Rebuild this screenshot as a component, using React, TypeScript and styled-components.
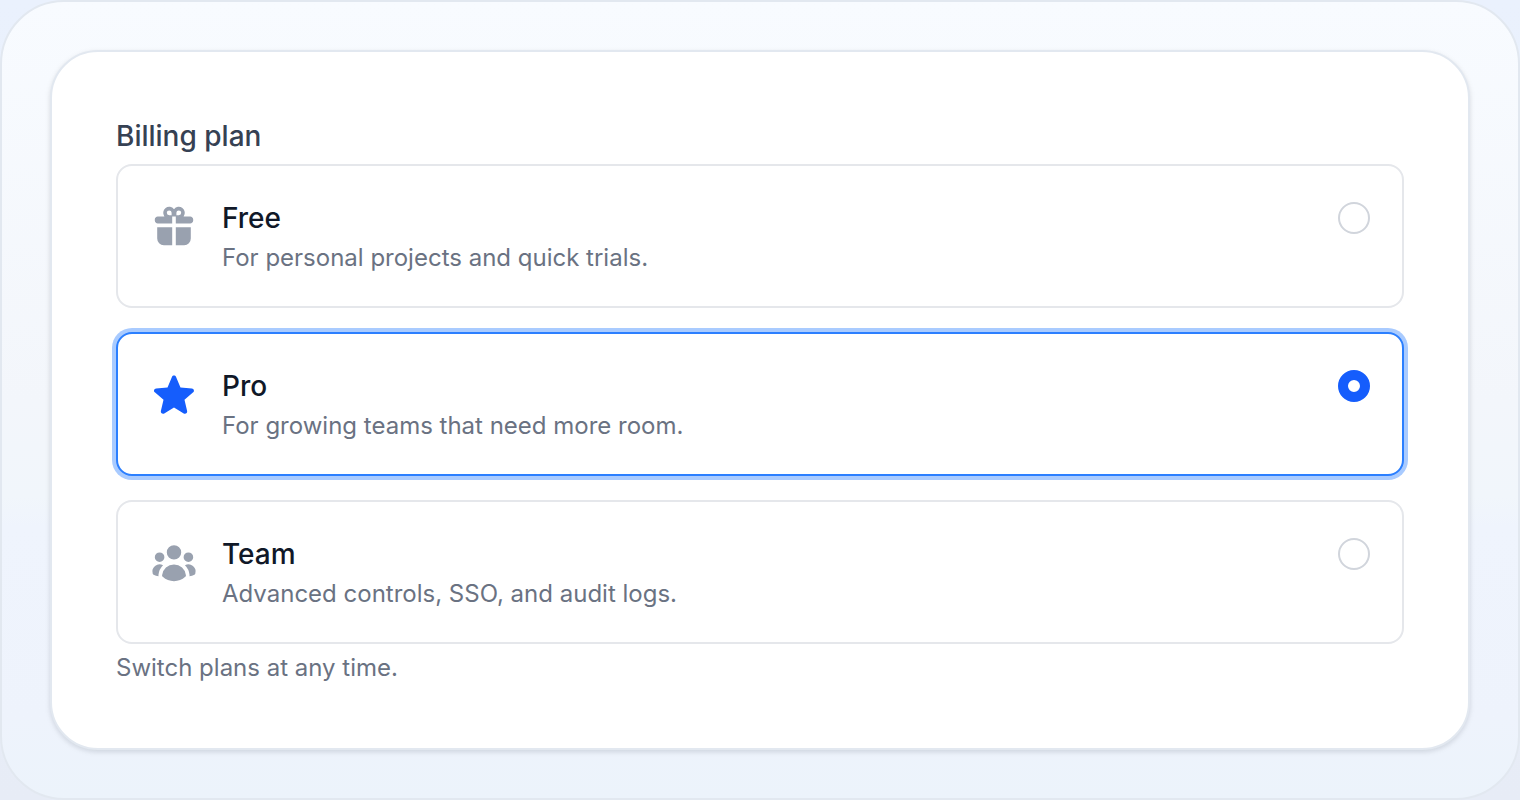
import React, { useState } from "react";
import styled, { createGlobalStyle } from "styled-components";
import { HiMiniGift, HiMiniStar, HiMiniUserGroup } from "react-icons/hi2";

const GlobalStyle = createGlobalStyle`
  *, *::before, *::after { box-sizing: border-box; }
  body {
    margin: 0;
    font-family: Inter, "Liberation Sans", sans-serif;
    background: linear-gradient(180deg, #eaf1fd, #e7ecf6);
  }
`;

const Stage = styled.main`
  min-height: 100vh;
  padding: 48px;
  border: 2px solid #e2e8f0;
  border-radius: 64px;
  background: linear-gradient(180deg, #f8fbff 0%, #f3f6fb 50%, #f1f6fb 62%, #eff4fd 66%, #eef3fc 90%, #ecf3fb 100%);
`;

const Panel = styled.section`
  padding: 64px;
  border: 2px solid #e2e8f0;
  border-radius: 48px;
  background: #ffffff;
  box-shadow: 0 2px 6px rgba(15, 23, 42, 0.08), 0 2px 4px rgba(15, 23, 42, 0.06);
`;

const PlanGroup = styled.fieldset`
  margin: 0;
  padding: 0;
  border: 0;
  min-width: 0;
`;

const GroupLabel = styled.legend`
  padding: 0;
  margin-bottom: 8px;
  font-size: 28px;
  line-height: 40px;
  font-weight: 500;
  color: #364153;
`;

const PlanList = styled.div`
  display: grid;
  gap: 24px;
`;

const PlanCard = styled.label<{ $selected: boolean }>`
  display: flex;
  align-items: flex-start;
  gap: 24px;
  padding: 32px;
  border: 2px solid ${(p) => (p.$selected ? "#2b7fff" : "#e5e7eb")};
  border-radius: 16px;
  background: #ffffff;
  box-shadow: ${(p) => (p.$selected ? "0 0 0 4px #a9cbff" : "none")};
  cursor: pointer;
`;

const PlanIcon = styled.span<{ $selected: boolean }>`
  display: flex;
  margin-top: 4px;
  font-size: 48px;
  color: ${(p) => (p.$selected ? "#155dfc" : "#99a1af")};
`;

const PlanText = styled.span`
  display: flex;
  flex: 1;
  flex-direction: column;
  gap: 4px;
  min-width: 0;
`;

const PlanName = styled.span`
  font-size: 28px;
  line-height: 40px;
  font-weight: 500;
  color: #101828;
`;

const Note = styled.span`
  font-size: 24px;
  line-height: 32px;
  color: #6a7282;
`;

const Radio = styled.input`
  appearance: none;
  flex: none;
  width: 32px;
  height: 32px;
  margin: 4px 0 0;
  border: 2px solid #d1d5dc;
  border-radius: 50%;
  background: #ffffff;
  cursor: pointer;

  &:checked {
    border: 10px solid #155dfc;
  }
`;

const Hint = styled(Note)`
  display: block;
  margin-top: 8px;
`;

const plans = [
  { id: "free", name: "Free", note: "For personal projects and quick trials.", Icon: HiMiniGift },
  { id: "pro", name: "Pro", note: "For growing teams that need more room.", Icon: HiMiniStar },
  { id: "team", name: "Team", note: "Advanced controls, SSO, and audit logs.", Icon: HiMiniUserGroup },
];

export default function App() {
  const [selected, setSelected] = useState("pro");
  return (
    <>
      <GlobalStyle />
      <Stage>
        <Panel>
          <PlanGroup aria-describedby="plan-hint">
            <GroupLabel>Billing plan</GroupLabel>
            <PlanList>
              {plans.map(({ id, name, note, Icon }) => (
                <PlanCard key={id} htmlFor={id} $selected={selected === id}>
                  <PlanIcon $selected={selected === id}>
                    <Icon aria-hidden="true" />
                  </PlanIcon>
                  <PlanText>
                    <PlanName>{name}</PlanName>
                    <Note>{note}</Note>
                  </PlanText>
                  <Radio
                    type="radio"
                    name="plan"
                    id={id}
                    value={id}
                    checked={selected === id}
                    onChange={() => setSelected(id)}
                  />
                </PlanCard>
              ))}
            </PlanList>
            <Hint id="plan-hint">Switch plans at any time.</Hint>
          </PlanGroup>
        </Panel>
      </Stage>
    </>
  );
}
